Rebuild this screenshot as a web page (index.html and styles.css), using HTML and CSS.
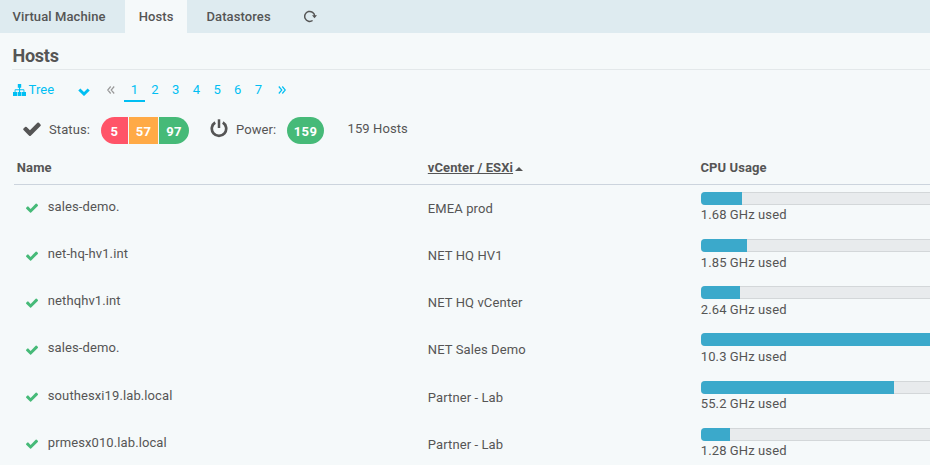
FILE: index.html
```
<!DOCTYPE html>
<html lang="en">
<head>
<meta charset="utf-8">
<title>Hosts</title>
<link rel="stylesheet" href="styles.css">
</head>
<body>
<svg class="defs" width="0" height="0"><symbol id="check" viewBox="121 286 1550 1236"><path d="M1671 566q0 40-28 68l-724 724-136 136q-28 28-68 28t-68-28l-136-136-362-362q-28-28-28-68t28-68l136-136q28-28 68-28t68 28l294 295 656-657q28-28 68-28t68 28l136 136q28 28 28 68z"/></symbol></svg>
<nav class="tabs">
  <a class="tab">Virtual Machine</a>
  <a class="tab active">Hosts</a>
  <a class="tab">Datastores</a>
  <a class="refresh"><svg width="14" height="13" viewBox="0 0 14 13"><path d="M8.6 10.5A5 5 0 1 1 10.7 6" fill="none" stroke="#555" stroke-width="1.5"/><path d="M8 5.3h5l-2.5 2.9z" fill="#555"/></svg></a>
</nav>
<main>
  <h1>Hosts</h1>
  <div class="toolbar">
    <a class="tree"><svg width="13" height="12" viewBox="0 0 13 11" preserveAspectRatio="none"><path d="M4.8 0h3.4v3.4H7.1v1.4h3.4q.9 0 .9.9v1.6H13V11H9V7.3h1.5V5.7H7.1v1.6h1.4V11H4.6V7.3H6V5.7H2.5v1.6H4V11H0V7.3h1.6V5.7q0-.9.9-.9H6V3.4H4.8z" fill="#00bff3"/></svg>Tree</a>
    <svg class="chev" width="12" height="8" viewBox="0 0 12 8"><path d="M1.3 1.5 6 6l4.7-4.5" fill="none" stroke="#00bff3" stroke-width="3"/></svg>
    <svg class="prev" width="8" height="8" viewBox="0 0 8 8"><path d="M3.7.5.7 4l3 3.5M7.2.5l-3 3.5 3 3.5" fill="none" stroke="#999" stroke-width="1.2"/></svg>
    <div class="pages"><a class="current">1</a><a>2</a><a>3</a><a>4</a><a>5</a><a>6</a><a>7</a></div>
    <svg class="next" width="8" height="8" viewBox="0 0 8 8"><path d="m.8.5 3 3.5-3 3.5M4.3.5l3 3.5-3 3.5" fill="none" stroke="#00bff3" stroke-width="1.2"/></svg>
  </div>
  <div class="summary">
    <svg class="big-check"><use href="#check"/></svg>
    <span class="status-label">Status:</span>
    <div class="pill"><b class="red">5</b><b class="orange">57</b><b class="green">97</b></div>
    <svg class="power" width="18" height="19" viewBox="0 0 18 19" fill="none" stroke="#555"><path d="M5.2 3.5A7.2 7.2 0 1 0 12.8 3.5" stroke-width="2.7"/><path d="M9 .3v8.7" stroke-width="2.5"/></svg>
    <span class="power-label">Power:</span>
    <div class="pill"><b class="green only">159</b></div>
    <span class="count">159 Hosts</span>
  </div>
  <div class="table">
    <div class="row head"><div>Name</div><div><span class="sorted">vCenter / ESXi</span><i class="caret"></i></div><div>CPU Usage</div></div>
    <div class="row"><div class="name"><svg><use href="#check"/></svg>sales-demo.</div><div class="vc">EMEA prod</div><div class="cpu"><div class="bar"><div style="width:41px"></div></div>1.68 GHz used</div></div>
    <div class="row"><div class="name"><svg><use href="#check"/></svg>net-hq-hv1.int</div><div class="vc">NET HQ HV1</div><div class="cpu"><div class="bar"><div style="width:46px"></div></div>1.85 GHz used</div></div>
    <div class="row"><div class="name"><svg><use href="#check"/></svg>nethqhv1.int</div><div class="vc">NET HQ vCenter</div><div class="cpu"><div class="bar"><div style="width:39px"></div></div>2.64 GHz used</div></div>
    <div class="row"><div class="name"><svg><use href="#check"/></svg>sales-demo.</div><div class="vc">NET Sales Demo</div><div class="cpu"><div class="bar"><div style="width:100%"></div></div>10.3 GHz used</div></div>
    <div class="row"><div class="name"><svg><use href="#check"/></svg>southesxi19.lab.local</div><div class="vc">Partner - Lab</div><div class="cpu"><div class="bar"><div style="width:193px"></div></div>55.2 GHz used</div></div>
    <div class="row"><div class="name"><svg><use href="#check"/></svg>prmesx010.lab.local</div><div class="vc">Partner - Lab</div><div class="cpu"><div class="bar"><div style="width:29px"></div></div>1.28 GHz used</div></div>
  </div>
</main>
</body>
</html>
```
FILE: styles.css
```
* { box-sizing: border-box; }
body { margin: 0; height: 465px; overflow: hidden; background: #f5f9fa; color: #555; font: 13px/18px Roboto, sans-serif; letter-spacing: .1px; }
svg { display: block; flex: none; }
.defs { position: absolute; }
.tabs { display: flex; height: 33px; background: #deebf0; }
.tab { padding: 8px 0 0 19.5px; width: 105px; font-weight: 500; }
.tab:first-child { padding-left: 12.5px; width: 125px; }
.tab.active { padding-left: 13.7px; width: 62px; background: #f5f9fa; }
.refresh { padding: 10px 0 0 12px; }
h1 { margin: 0 0 0 12px; height: 37px; padding: 11px 0 0 .5px; border-bottom: 1px solid #e3e8ea; font-size: 18px; line-height: 24px; font-weight: 700; letter-spacing: -.25px; }
.toolbar { display: flex; height: 40px; padding: 11px 0 0 13px; color: #00bff3; }
.tree { display: flex; width: 65px; gap: 2.5px; }
.tree svg { margin-top: 3px; }
.chev { margin-top: 6.5px; }
.prev { margin: 5px 0 0 17px; }
.pages { display: flex; margin-left: 9px; }
.pages a { width: 20.7px; height: 21px; text-align: center; }
.pages .current { border-bottom: 2px solid #00bff3; }
.next { margin: 5px 0 0 9px; }
.summary { display: flex; height: 43px; padding: 7px 0 0 23px; }
.big-check { width: 18px; height: 14px; margin: 5px 8px 0 0; fill: #555; }
.status-label { width: 52px; padding-top: 4px; }
.pill { display: flex; gap: 1px; height: 27px; border-radius: 14px; overflow: hidden; }
.pill b { color: #fff; text-align: center; line-height: 29px; letter-spacing: .4px; }
.red { width: 27px; background: #ff5468; }
.orange { width: 29px; background: #ffaa46; }
.green { width: 30px; background: #46ba78; }
.only { width: 37px; }
.power { margin: 2px 8px 0 21px; }
.power-label { width: 51px; padding-top: 4px; }
.count { margin-left: 23.5px; padding-top: 3px; }
.table { margin-left: 14px; }
.row { display: grid; grid-template-columns: 413.8px 273px 1fr; height: 47.2px; }
.head { height: 31.85px; padding: 6px 0 0 2.8px; grid-template-columns: 411px 272.7px 1fr; border-bottom: 1px solid #ccd4dd; font-weight: 700; }
.sorted { text-decoration: underline; }
.caret { display: inline-block; margin-left: 2px; border: 4px solid transparent; border-bottom-color: #555; border-top: 0; vertical-align: 1px; }
.name { display: flex; padding: 13px 0 0 12px; gap: 9.8px; }
.name svg { width: 12px; height: 10px; margin-top: 5.5px; fill: #46ba78; }
.vc { padding-top: 15px; }
.cpu { padding-top: 7px; }
.bar { height: 13px; margin-bottom: 1.5px; background: #e8ebed; border: 1px solid #d3d7d9; border-width: 1px 0; border-radius: 4px 0 0 4px; }
.bar div { height: 13px; margin-top: -1px; background: #3ba9cb; border-radius: 4px 0 0 4px; }
```
